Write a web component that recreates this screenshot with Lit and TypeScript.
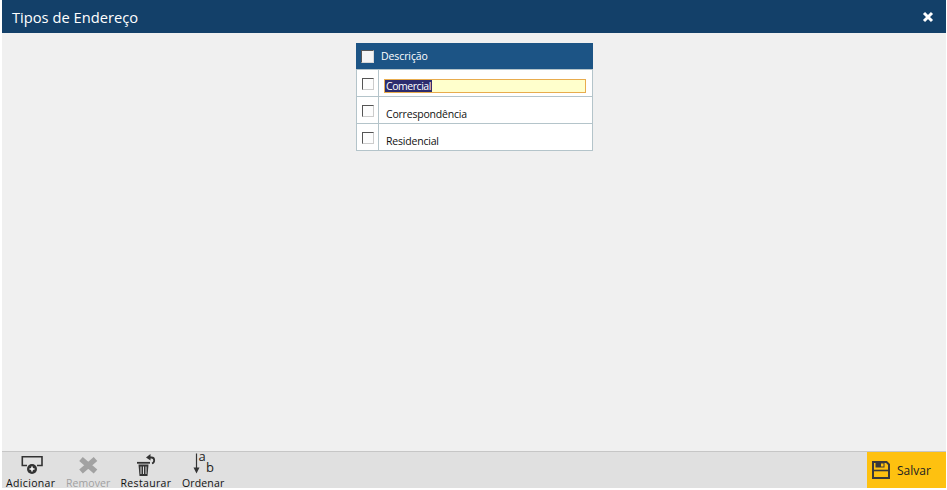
import { LitElement, html, css } from "lit";
import { customElement } from "lit/decorators.js";

const ROWS = ["Comercial", "Correspondência", "Residencial"];

@customElement("app-root")
export class AppRoot extends LitElement {
  static styles = css`
    :host { display: block; width: 947px; height: 490px; background: #fff; font-family: "Open Sans", "Noto Sans", sans-serif; color: #111; }
    .win { height: 488px; margin-left: 2px; margin-right: 1px; display: flex; flex-direction: column; }
    .head { height: 33px; flex: none; background: #134069; color: #fff; display: flex; align-items: center; justify-content: space-between; padding: 0 12px 0 10px; box-sizing: border-box; font-size: 14.7px; }
    .close { width: 12px; height: 12px; display: block; }
    .main { flex: 1; background: #f0f0f0; display: flex; justify-content: center; padding-top: 10px; padding-left: 1px; box-sizing: border-box; align-items: flex-start; }
    .grid { width: 237px; font-size: 10.5px; }
    .gh { height: 26px; background: #1c5485; color: #fff; display: flex; align-items: center; padding-left: 5px; gap: 7px; box-sizing: border-box; letter-spacing: -0.1px; }
    .gh .cb { background: #f4f4f4; border: 1px solid #d8d8d8; border-top-color: #555; border-left-color: #555; width: 13px; height: 13px; }
    .gb { border: 1px solid #b4c4ca; border-top: none; background: #fff; }
    .row { height: 27px; display: flex; box-sizing: border-box; border-top: 1px solid #b4c4ca; }
    .c1 { width: 22px; flex: none; border-right: 1px solid #b4c4ca; padding: 8px 0 0 5px; box-sizing: border-box; }
    .cb { width: 12px; height: 12px; box-sizing: border-box; border: 1px solid #ccc; border-top-color: #555; border-left-color: #555; background: #fdfdfd; display: block; flex: none; }
    .c2 { flex: 1; padding: 9px 6px 0 5px; min-width: 0; }
    .txt { display: block; padding-left: 2px; line-height: 14px; margin-top: 1px; letter-spacing: -0.2px; }
    .inp { height: 14px; box-sizing: border-box; border: 1px solid #e8ac4e; background: #ffffcc; line-height: 12px; display: flex; padding-left: 0; }
    .inp span { background: #2c2c6e; color: #fff; padding: 0 1px; letter-spacing: -0.45px; }
    .foot { height: 37px; flex: none; background: #e0e0e0; border-top: 1px solid #c6c6c6; box-sizing: border-box; display: flex; justify-content: space-between; }
    .tools { display: flex; padding-left: 4px; gap: 10px; }
    .tool { display: flex; flex-direction: column; align-items: center; font-size: 10.5px; letter-spacing: 0.35px; }
    .tool svg { display: block; height: 25px; width: 24px; overflow: visible; margin-bottom: 1px; }
    .tool span { line-height: 11px; }
    .tool text { font-family: "Open Sans", sans-serif; font-size: 13px; fill: #222; }
    .tool.off { color: #a0a0a0; letter-spacing: 0.1px; margin-left: 0.5px; }
    .tool.sort { letter-spacing: 0.15px; margin-left: 0.5px; }
    .save { width: 79px; background: #fec110; display: flex; align-items: center; padding-left: 5px; gap: 7px; box-sizing: border-box; font-size: 12px; color: #222; }
    .save svg { width: 18px; height: 18px; display: block; }
  `;

  render() {
    return html`<div class="win">
      <div class="head">
        <span>Tipos de Endereço</span>
        <svg class="close" viewBox="0 0 12 12"><path d="M2 2l8 8M10 2l-8 8" stroke="#fff" stroke-width="3" fill="none"/></svg>
      </div>
      <div class="main">
        <div class="grid">
          <div class="gh"><i class="cb"></i><span>Descrição</span></div>
          <div class="gb">
            ${ROWS.map((r, i) => html`<div class="row">
              <div class="c1"><i class="cb"></i></div>
              <div class="c2">${i === 0
                ? html`<div class="inp"><span>${r}</span></div>`
                : html`<span class="txt">${r}</span>`}</div>
            </div>`)}
          </div>
        </div>
      </div>
      <div class="foot">
        <div class="tools">
          <div class="tool"><svg viewBox="0 0 24 25"><path d="M8 13.500H3.300V4.800H23V13.500H18" fill="none" stroke="#333" stroke-width="1.600"/><circle cx="13" cy="17" r="5" fill="#333"/><path d="M13 14.500v5M10.500 17h5" stroke="#fff" stroke-width="1.500"/></svg><span>Adicionar</span></div>
          <div class="tool off"><svg viewBox="0 0 24 25"><path d="M5 7L19.500 19.500M19.500 7L5 19.500" stroke="#a2a2a2" stroke-width="5.500" fill="none"/></svg><span>Remover</span></div>
          <div class="tool"><svg viewBox="0 0 24 25"><path d="M4.500 12.500H14.500L13.500 24H5.500Z" fill="#333"/><path d="M3 10.800H16" stroke="#333" stroke-width="1.800"/><path d="M7 14.500v7.500M9.500 14.500v7.500M12 14.500v7.500" stroke="#e0e0e0" stroke-width="1"/><path d="M15 5.500H17.500C21 5.500 21 10.500 18 11.500" fill="none" stroke="#333" stroke-width="1.800"/><path d="M16.500 2L12 5.500L16.500 8.500Z" fill="#333"/></svg><span>Restaurar</span></div>
          <div class="tool sort"><svg viewBox="0 0 24 25"><path d="M5.500 1.500V18" stroke="#333" stroke-width="1.200"/><path d="M2.500 15.500L5.500 21.500L8.500 15.500Z" fill="#333"/><text x="7.500" y="9">a</text><text x="15" y="20">b</text></svg><span>Ordenar</span></div>
        </div>
        <div class="save"><svg viewBox="0 0 18 18"><path d="M1 1H14.500L17 3.500V17H1Z" fill="none" stroke="#3a3a3a" stroke-width="2"/><path d="M3.500 1H12.500V6.500H3.500Z" fill="#3a3a3a"/><path d="M9 2.500H11.500V5.500H9Z" fill="#fec110"/><path d="M1 9.500H17" stroke="#3a3a3a" stroke-width="1.600"/></svg><span>Salvar</span></div>
      </div>
    </div>`;
  }
}
